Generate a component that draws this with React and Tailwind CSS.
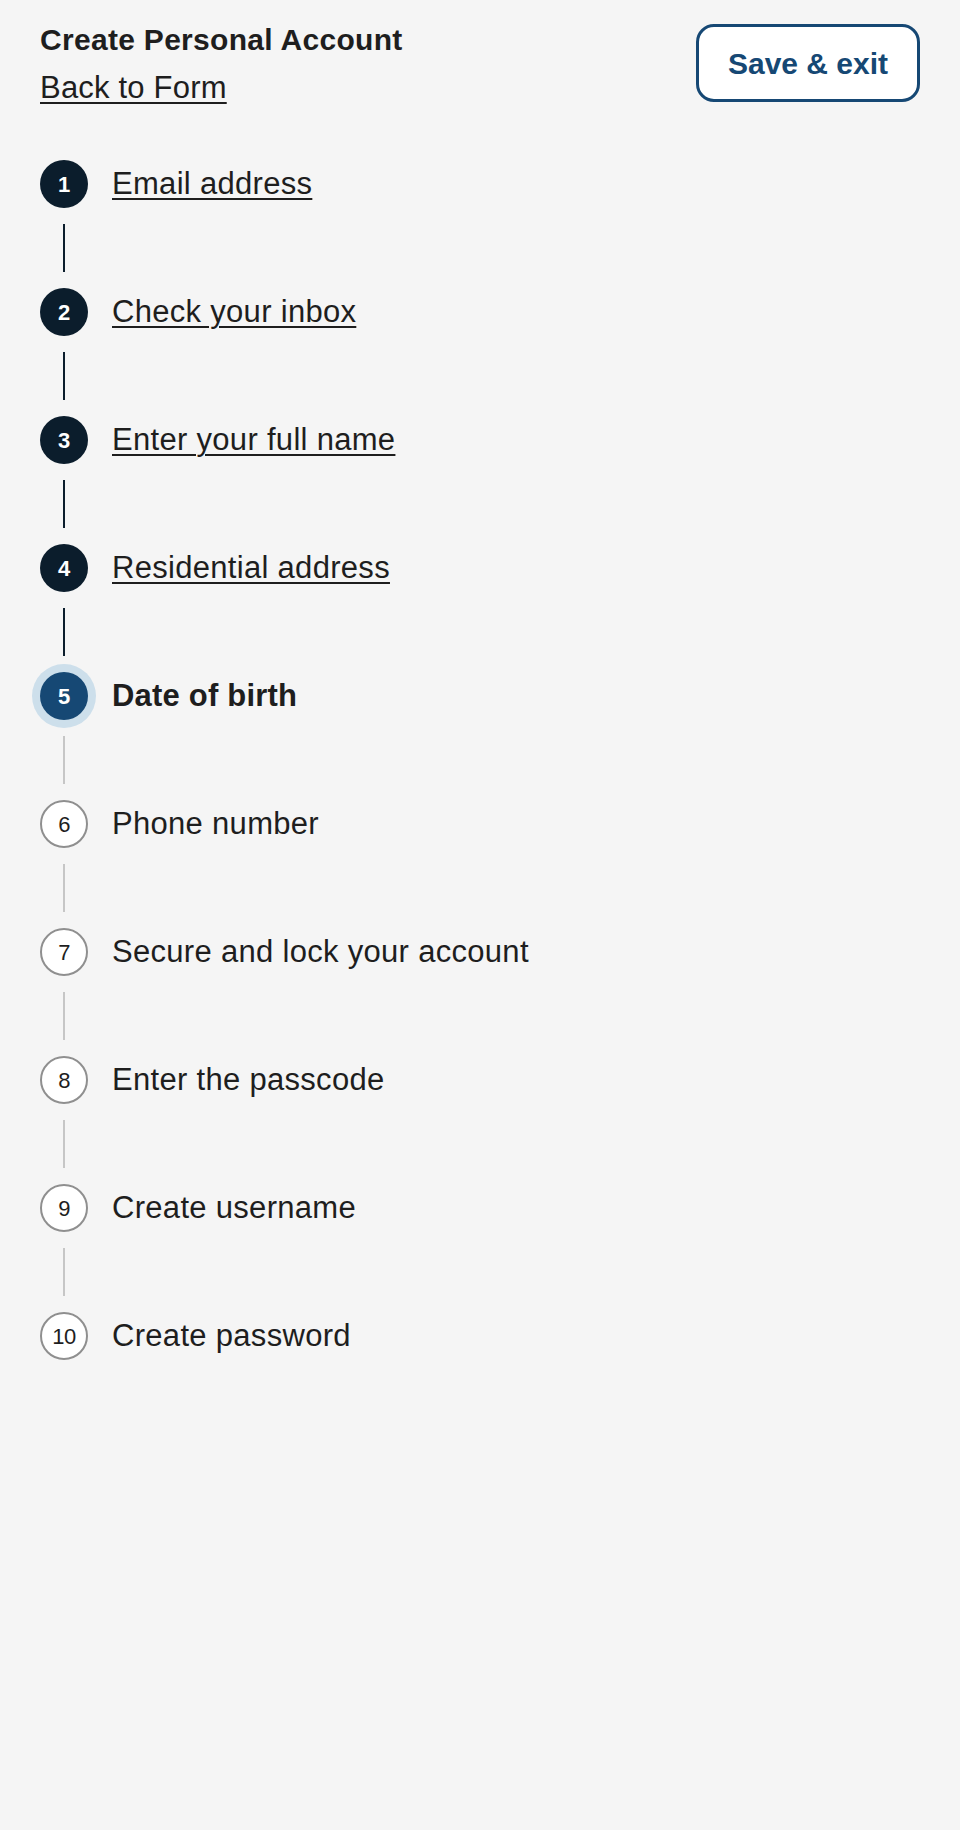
import React from "react";

const steps = [
  { n: 1, label: "Email address", state: "done" },
  { n: 2, label: "Check your inbox", state: "done" },
  { n: 3, label: "Enter your full name", state: "done" },
  { n: 4, label: "Residential address", state: "done" },
  { n: 5, label: "Date of birth", state: "current" },
  { n: 6, label: "Phone number", state: "todo" },
  { n: 7, label: "Secure and lock your account", state: "todo" },
  { n: 8, label: "Enter the passcode", state: "todo" },
  { n: 9, label: "Create username", state: "todo" },
  { n: 10, label: "Create password", state: "todo" },
];

function Circle({ step }) {
  if (step.state === "done") {
    return (
      <div className="w-12 h-12 shrink-0 rounded-full bg-[#0b1d2c] text-white flex items-center justify-center text-[22px] font-bold">
        {step.n}
      </div>
    );
  }
  if (step.state === "current") {
    return (
      <div className="w-12 h-12 shrink-0 rounded-full bg-[#164874] ring-8 ring-[#cddfeb] text-white flex items-center justify-center text-[22px] font-bold">
        {step.n}
      </div>
    );
  }
  return (
    <div className="w-12 h-12 shrink-0 rounded-full bg-white border-2 border-[#8f8f8f] text-[#1e1e1e] flex items-center justify-center text-[22px] tracking-[-0.5px]">
      {step.n}
    </div>
  );
}

export default function App() {
  return (
    <div
      className="min-h-[1830px] bg-[#f5f5f5] text-[#1e1e1e]"
      style={{ fontFamily: '"Liberation Sans", Arial, sans-serif' }}
    >
      {/* HEADER */}
      <div className="flex justify-between items-start px-10">
        <div className="pt-[22px]">
          <h1 className="text-[30px] leading-9 font-bold tracking-[0.3px]">Create Personal Account</h1>
          <a
            href="#"
            className="block mt-[10px] text-[31px] leading-10 tracking-[0.2px] underline decoration-[1.5px] underline-offset-[4px]"
          >
            Back to Form
          </a>
        </div>

        <button className="mt-6 w-[224px] h-[78px] rounded-[18px] border-[3px] border-[#164874] bg-white text-[#164874] text-[30px] font-bold">
          Save &amp; exit
        </button>
      </div>

      {/* STEPS */}
      <div className="px-10 mt-[52px]">
        {steps.map((s, i) => (
          <div key={s.n}>
            <div className="flex items-center h-12 gap-6">
              <Circle step={s} />
              {s.state === "done" && (
                <a
                  href="#"
                  className="text-[31px] leading-[48px] tracking-[0.3px] underline decoration-[1.5px] underline-offset-[4px]"
                >
                  {s.label}
                </a>
              )}
              {s.state === "current" && (
                <span className="text-[31px] leading-[48px] tracking-[0.2px] font-bold">{s.label}</span>
              )}
              {s.state === "todo" && (
                <span className="text-[31px] leading-[48px] tracking-[0.3px]">{s.label}</span>
              )}
            </div>

            {i < steps.length - 1 && (
              <div className="w-12 flex justify-center py-4">
                <div
                  className={
                    s.state === "done"
                      ? "w-[2px] h-12 bg-[#0b1d2c]"
                      : "w-[2px] h-12 bg-[#c6c6c6]"
                  }
                />
              </div>
            )}
          </div>
        ))}
      </div>
    </div>
  );
}
